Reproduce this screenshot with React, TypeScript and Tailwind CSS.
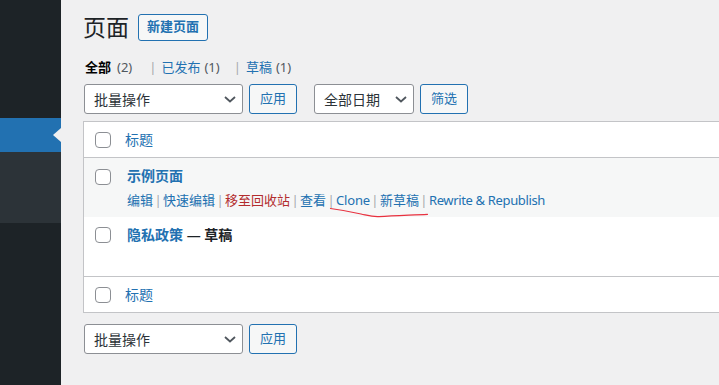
import React from "react";

function Chevron() {
  return (
    <svg width="12" height="7" viewBox="0 0 12 7" className="shrink-0">
      <path d="M1 1 L6 5.5 L11 1" fill="none" stroke="#50575e" strokeWidth="1.8" />
    </svg>
  );
}

function Select({ label, w }: { label: string; w: string }) {
  return (
    <div
      className={`${w} h-[30px] shrink-0 bg-white border border-[#8c8f94] rounded-[3px] flex items-center justify-between pl-[9px] pr-[6px] text-[14px] text-[#2c3338]`}
    >
      <span>{label}</span>
      <Chevron />
    </div>
  );
}

function Btn({ label }: { label: string }) {
  return (
    <div className="w-[48px] h-[30px] shrink-0 bg-[#f6f7f7] border border-[#2271b1] rounded-[3px] flex items-center justify-center text-[13px] text-[#2271b1]">
      {label}
    </div>
  );
}

function Checkbox() {
  return <div className="w-[16px] h-[16px] shrink-0 bg-white border border-[#8c8f94] rounded-[4px]" />;
}

function Sep() {
  return <span className="inline-block w-[10px] text-center text-[#a7aaad]">|</span>;
}

export default function App() {
  return (
    <div className="relative w-[719px] h-[385px] overflow-hidden flex bg-[#f0f0f1] font-['Noto_Sans','Noto_Sans_CJK_SC',sans-serif]">
      {/* Sidebar */}
      <div className="w-[61px] shrink-0 bg-[#1d2327] flex flex-col">
        <div className="h-[118px]" />
        <div className="relative h-[34px] bg-[#2271b1]">
          <div className="absolute right-0 top-[10px] w-0 h-0 border-y-[7px] border-y-transparent border-r-[8px] border-r-[#f0f0f1]" />
        </div>
        <div className="h-[71px] bg-[#2c3338]" />
      </div>

      {/* Main */}
      <div className="flex-1 min-w-0 pl-[22px] pt-[12px]">
        <div className="flex items-center h-[30px]">
          <h1 className="text-[23px] leading-[30px] font-normal text-[#1d2327]">页面</h1>
          <div className="ml-[9px] h-[27px] px-[8px] flex items-center bg-[#f6f7f7] border border-[#2271b1] rounded-[3px] text-[13px] font-semibold text-[#2271b1]">
            新建页面
          </div>
        </div>

        <div className="mt-[15px] h-[20px] leading-[20px] text-[13px] ml-[2px] flex items-center whitespace-pre">
          <span className="font-semibold text-black">全部</span>
          <span className="ml-[6px] text-[#50575e]">(2)</span>
          <span className="ml-[17px] text-[#a7aaad]">|</span>
          <span className="ml-[5px] text-[#2271b1]">已发布</span>
          <span className="ml-[4px] text-[#50575e]">(1)</span>
          <span className="ml-[14px] text-[#a7aaad]">|</span>
          <span className="ml-[5px] text-[#2271b1]">草稿</span>
          <span className="ml-[4px] text-[#50575e]">(1)</span>
        </div>

        <div className="mt-[7px] flex items-center h-[30px]">
          <div className="ml-[1px]" />
          <Select label="批量操作" w="w-[159px]" />
          <div className="ml-[6px]">
            <Btn label="应用" />
          </div>
          <div className="ml-[17px]">
            <Select label="全部日期" w="w-[100px]" />
          </div>
          <div className="ml-[6px]">
            <Btn label="筛选" />
          </div>
        </div>

        {/* Table */}
        <div className="mt-[7px] w-[680px] bg-white border border-[#c3c4c7]">
          <div className="h-[36px] border-b border-[#c3c4c7] flex items-center">
            <div className="w-[41px] pl-[11px] shrink-0">
              <Checkbox />
            </div>
            <span className="text-[14px] text-[#2271b1]">标题</span>
          </div>

          <div className="h-[59px] bg-[#f6f7f7] flex">
            <div className="w-[41px] pl-[11px] pt-[11px] shrink-0">
              <Checkbox />
            </div>
            <div className="pl-[2px] pt-[8px]">
              <div className="h-[20px] leading-[20px] text-[14px] font-semibold text-[#2271b1]">示例页面</div>
              <div className="mt-[4px] h-[20px] leading-[20px] text-[13px] text-[#2271b1] whitespace-pre">
                <span>编辑</span>
                <Sep />
                <span>快速编辑</span>
                <Sep />
                <span className="text-[#b32d2e]">移至回收站</span>
                <Sep />
                <span>查看</span>
                <Sep />
                <span className="tracking-[-0.2px]">Clone</span>
                <Sep />
                <span>新草稿</span>
                <Sep />
                <span className="tracking-[-0.35px]">Rewrite &amp; Republish</span>
              </div>
            </div>
          </div>

          <div className="h-[59px] bg-white flex">
            <div className="w-[41px] pl-[11px] pt-[10px] shrink-0">
              <Checkbox />
            </div>
            <div className="pl-[2px] pt-[8px]">
              <div className="h-[20px] leading-[20px] text-[14px] font-semibold whitespace-pre">
                <span className="text-[#2271b1]">隐私政策</span>
                <span className="text-[#1d2327]"> — 草稿</span>
              </div>
            </div>
          </div>

          <div className="h-[36px] border-t border-[#c3c4c7] flex items-center">
            <div className="w-[41px] pl-[11px] shrink-0">
              <Checkbox />
            </div>
            <span className="text-[14px] text-[#2271b1]">标题</span>
          </div>
        </div>

        <div className="mt-[11px] flex items-center h-[30px]">
          <div className="ml-[1px]" />
          <Select label="批量操作" w="w-[159px]" />
          <div className="ml-[6px]">
            <Btn label="应用" />
          </div>
        </div>
      </div>

      {/* Hand-drawn red annotation */}
      <svg className="absolute left-0 top-0 pointer-events-none" width="719" height="385" viewBox="0 0 719 385">
        <path
          d="M330.5 208.5 C 342 210, 352 212, 361 214 C 368 215.5, 372 217, 379 216.6 C 395 216, 412 215, 427.5 214.3"
          fill="none"
          stroke="#e8313f"
          strokeWidth="1.2"
          strokeLinecap="round"
        />
      </svg>
    </div>
  );
}
